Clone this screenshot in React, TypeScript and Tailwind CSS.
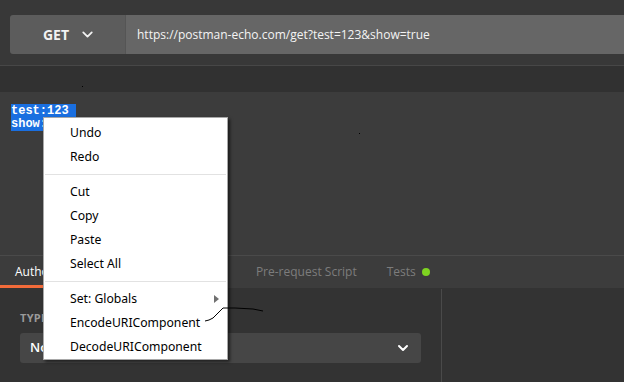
import { ChevronDown } from 'lucide-react';

const menuFont = { fontFamily: '"Noto Sans", "Liberation Sans", sans-serif' };

export default function App() {
  return (
    <div
      className="relative h-[382px] w-[624px] overflow-hidden bg-[#3c3c3c] text-white"
      style={{ fontFamily: '"Open Sans", "Noto Sans", sans-serif' }}
    >
      <UrlBar />
      <div className="h-[27px] border-t border-[#474747] bg-[#313131]" />
      <Editor />
      <Tabs />
      <AuthPanel />
      <ContextMenu />
      <Scribble />
    </div>
  );
}

function UrlBar() {
  return (
    <div className="h-[65px] bg-[#383838] pl-[10px] pt-[15px]">
      <div className="flex h-[39px]">
        <div className="flex w-[116px] items-center justify-center gap-[10px] rounded-l-[3px] border-r border-[#555] bg-[#5c5c5c] pl-[4px]">
          <span className="text-[14px] font-bold text-[#f2f2f2]">GET</span>
          <ChevronDown size={17} strokeWidth={2.5} className="text-[#f2f2f2]" />
        </div>
        <div className="flex flex-1 items-center bg-[#666666] pl-[11px] text-[12px] text-[#f4f4f4]">
          https://postman-echo.com/get?test=123&amp;show=true
        </div>
      </div>
    </div>
  );
}

function Editor() {
  return (
    <div
      className="h-[163px] pl-[11px] pt-[13px] text-[12px] font-bold leading-[13px] text-white"
      style={{ fontFamily: '"Liberation Mono", monospace' }}
    >
      <div>
        <span className="bg-[#1a6fe0]">test:123&nbsp;</span>
      </div>
      <div>
        <span className="bg-[#1a6fe0]">show:true</span>
      </div>
    </div>
  );
}

function Tabs() {
  return (
    <div className="flex h-[33px] items-stretch border-t border-[#4a4a4a] bg-[#3c3c3c] text-[12px]">
      <div className="flex items-center border-b-[3px] border-[#f26b3a] px-[15px] pt-[3px] text-white">Authorization</div>
      <div className="flex items-center px-[15px] text-[#8a8a8a]">Headers</div>
      <div className="flex w-[58px] items-center px-[15px] text-[#8a8a8a]">Body</div>
      <div className="flex items-center pl-[15px] text-[#7c7c7c]">Pre-request Script</div>
      <div className="ml-[30px] flex items-center gap-[6px] text-[#7c7c7c]">
        Tests
        <span className="h-[8px] w-[8px] rounded-full bg-[#7ed321]" />
      </div>
    </div>
  );
}

function AuthPanel() {
  return (
    <div className="flex h-[94px] border-t border-[#333] bg-[#333333]">
      <div className="w-[442px] border-r border-[#4a4a4a] px-[20px] pt-[21px]">
        <div className="text-[11px] font-bold tracking-wide text-[#9a9a9a]">TYPE</div>
        <div className="mt-[6px] flex h-[30px] items-center justify-between rounded-[3px] bg-[#464646] pl-[10px] pr-[10px]">
          <span className="text-[13px] font-semibold text-white">No Auth</span>
          <ChevronDown size={16} strokeWidth={3} className="text-white" />
        </div>
      </div>
      <div className="flex-1" />
    </div>
  );
}

function Item({ label, sub }: { label: string; sub?: boolean }) {
  return (
    <div className="relative flex h-[24px] items-center pl-[26px] text-[12.2px] text-black">
      {label}
      {sub && (
        <span className="absolute right-[8px] top-[8px] h-0 w-0 border-y-[4px] border-l-[5px] border-y-transparent border-l-[#707070]" />
      )}
    </div>
  );
}

function Sep() {
  return (
    <div className="flex h-[11px] items-center px-[1px]">
      <div className="h-px w-full bg-[#e2e2e2]" />
    </div>
  );
}

function ContextMenu() {
  return (
    <div
      className="absolute left-[43px] top-[117px] h-[243px] w-[185px] border border-[#a8a8a8] bg-white pt-[3px] shadow-[2px_2px_3px_rgba(0,0,0,0.55)]"
      style={menuFont}
    >
      <Item label="Undo" />
      <Item label="Redo" />
      <Sep />
      <Item label="Cut" />
      <Item label="Copy" />
      <Item label="Paste" />
      <Item label="Select All" />
      <Sep />
      <Item label="Set: Globals" sub />
      <Item label="EncodeURIComponent" />
      <Item label="DecodeURIComponent" />
    </div>
  );
}

// stray cursor trail and specks captured in the screenshot
function Scribble() {
  return (
    <svg className="pointer-events-none absolute left-0 top-0" width={624} height={382}>
      <polyline
        points="205,321 209,320 213,318 216,315 219,312 223,308 235,308 253,309 263,311"
        fill="none"
        stroke="#000"
        strokeWidth={1}
      />
      <rect x={82} y={86} width={1} height={1} fill="#000" />
      <rect x={359} y={133} width={1} height={1} fill="#000" />
    </svg>
  );
}
